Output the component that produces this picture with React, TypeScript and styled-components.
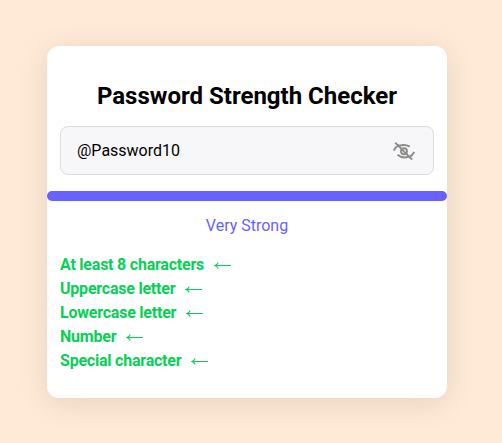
import React from "react";
import styled, { createGlobalStyle } from "styled-components";

const GlobalStyle = createGlobalStyle`
  * { box-sizing: border-box; margin: 0; padding: 0; }
  body { background: #ffead7; font-family: Roboto, sans-serif; }
`;

const Page = styled.main`
  min-height: 443px;
  padding: 46px 55px 45px 47px;
`;

const Card = styled.section`
  width: 400px;
  height: 352px;
  padding-top: 36px;
  background: #fff;
  border-radius: 12px;
  box-shadow: 0 5px 30px rgba(0, 0, 0, 0.1);
`;

const Title = styled.h1`
  font-size: 24px;
  font-weight: 700;
  line-height: 28px;
  text-align: center;
  color: #000;
`;

const Field = styled.div`
  display: flex;
  align-items: center;
  height: 49px;
  margin: 16px 13px 0;
  padding: 0 17px 0 16px;
  background: #f7f7f9;
  border: 1px solid #dddddd;
  border-radius: 8px;
`;

const Input = styled.input`
  flex: 1;
  min-width: 0;
  border: 0;
  outline: 0;
  background: transparent;
  font: 16px Roboto, sans-serif;
  color: #000;
`;

const EyeIcon = styled.svg`
  width: 24px;
  height: 24px;
  fill: none;
  stroke: #8c8c8a;
  stroke-width: 1.9;
`;

const Meter = styled.div`
  height: 10px;
  margin-top: 16px;
  border-radius: 5px;
  background: #6762ff;
`;

const Verdict = styled.p`
  margin-top: 15px;
  font-size: 16px;
  line-height: 19px;
  text-align: center;
  color: #6762ff;
`;

const Rules = styled.ul`
  list-style: none;
  margin: 17px 13px 0;
`;

const Rule = styled.li`
  display: flex;
  align-items: center;
  gap: 10px;
  height: 24px;
  font-size: 16px;
  font-weight: 700;
  letter-spacing: -0.22px;
  color: #04d156;
`;

const Arrow = styled.svg`
  width: 18px;
  height: 12px;
  fill: none;
  stroke: currentColor;
  stroke-width: 1.1;
`;

const rules = [
  "At least 8 characters",
  "Uppercase letter",
  "Lowercase letter",
  "Number",
  "Special character",
];

export default function App() {
  return (
    <Page>
      <GlobalStyle />
      <Card>
        <Title>Password Strength Checker</Title>
        <Field>
          <Input type="text" defaultValue="@Password10" aria-label="Password" />
          <EyeIcon viewBox="0 0 24 24" aria-hidden>
            <path d="M3.2 3.7L20.2 20.7M1.7 11.5Q3.5 8 7.2 5.8M7 7Q12.5 4.8 17.8 7.6M22.3 13Q20.5 16.5 16.5 18.7M5.5 15.8Q10.5 20 16.5 17.6" />
            <circle cx="12" cy="12.2" r="3" />
          </EyeIcon>
        </Field>
        <Meter />
        <Verdict>Very Strong</Verdict>
        <Rules>
          {rules.map((rule) => (
            <Rule key={rule}>
              <span>{rule}</span>
              <Arrow viewBox="0 0 18 12" aria-hidden>
                <path d="M17 7.5H1.5M4.2 4.4Q3.2 6.6 1 7.5Q3.2 8.4 4.2 10.6" />
              </Arrow>
            </Rule>
          ))}
        </Rules>
      </Card>
    </Page>
  );
}
